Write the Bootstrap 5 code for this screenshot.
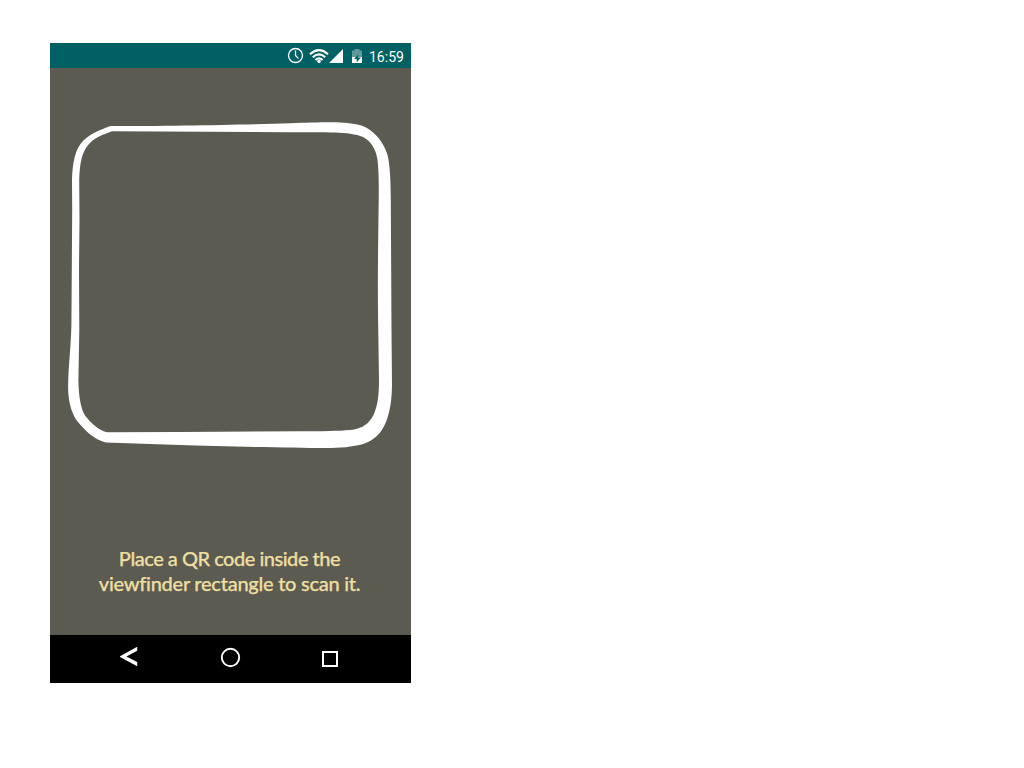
<!DOCTYPE html>
<html lang="en">
<head>
<meta charset="utf-8">
<meta name="viewport" content="width=device-width, initial-scale=1">
<title>Scan QR code</title>
<link href="https://cdn.jsdelivr.net/npm/bootstrap@5.3.0/dist/css/bootstrap.min.css" rel="stylesheet">
<style>
.phone { width: 361px; height: 640px; margin: 43px 0 0 50px; background: #5b5b52; }
.status-bar { height: 25px; background: #006064; padding-right: 6px; }
.clock-time { font: 400 14px/28px Roboto, sans-serif; width: 36px; height: 25px; white-space: nowrap; }
.viewfinder { height: 400px; }
.hint { font: 500 20px/25px Lato, sans-serif; color: #eedfa0; margin-top: 78px; padding-right: 2px; -webkit-text-stroke: .25px #eedfa0; }
.hint span { white-space: nowrap; }
.hint-top { letter-spacing: -.48px; }
.hint-bottom { letter-spacing: -.26px; }
.nav-keys { height: 48px; }
</style>
</head>
<body class="bg-white overflow-hidden">
<main class="phone d-flex flex-column">
  <header class="status-bar d-flex justify-content-end flex-shrink-0">
    <svg width="83" height="25" viewBox="286 43 83 25" aria-hidden="true">
      <circle cx="295.5" cy="55.5" r="7" fill="none" stroke="#fff" stroke-width="1.3"/>
      <path d="M295.5 50.5V55.5L298.5 58.5" fill="none" stroke="#fff" stroke-width="1.3"/>
      <g fill="none" stroke="#fff" stroke-width="2.1">
        <path d="M310 54.2Q319 46.2 328 54.2"/>
        <path d="M312.8 57.2Q319 51.7 325.2 57.2"/>
        <path d="M315.4 60Q319 56.900 322.6 60"/>
      </g>
      <circle cx="319" cy="61.5" r="1.8" fill="#fff"/>
      <path d="M343 49V63H329Z" fill="#fff"/>
      <path d="M354.5 49H359.5V50.5H362V57H352V50.5H354.5Z" fill="#5f999b"/>
      <path d="M352 57H362V63H352Z" fill="#fff"/>
      <path d="M358.300 54.500L354 59H356.700V62.300L361 57.500H358.300Z" fill="#006064"/>
    </svg>
    <span class="clock-time text-white">16:59</span>
  </header>
  <section class="flex-grow-1">
    <svg class="viewfinder d-block w-100" viewBox="50 68 361 400" role="img" aria-label="Viewfinder">
      <path fill="#fff" fill-rule="evenodd" d="M110.5 126C170 126 250 124.500 290 123.200C310 122.700 328 122 340 122.500C350 123 359 124 366 127.500C376 133 384 143 387.500 155C390 165 390.700 180 390.800 200L391.500 330L392 385C391.800 400 390 412 386 422C381 434 374 440 364 443.700C352 447 340 448 325 448C290 447.700 220 446.500 180 445L106 442.600C95 440 85 431 76 419.500C71 411 68.200 401 68.100 387C68.300 365 70.800 350 71.400 325L72.200 210L72 180C72.500 163 75 149 83 141C90 134 98 131 105 128Z
        M112 131.200L290 132.200C310 132.200 325 132 335 132.500C346 133 356 134 363 137C371 141 376 149 377.500 160C378.500 169 379 180 378.700 200C378.200 240 377.500 280 378.100 320L379 380C378.900 395 378 405 373.500 415C369 424 362 428 354 429.500C343 431 325 431.300 300 431.200L180 432L107 432.200C98 430 91 423 85 415.500C80.500 408 78.600 395 78.400 380L79.300 330L79 270L79.500 220L79.200 180C79.700 163 82 154 86 148C91 140 99 136 105 134Z"/>
    </svg>
    <p class="hint text-center mb-0"><span class="hint-top">Place a QR code inside the</span><br><span class="hint-bottom">viewfinder rectangle to scan it.</span></p>
  </section>
  <footer class="nav-keys bg-black flex-shrink-0">
    <svg class="d-block" width="361" height="48" viewBox="50 635 361 48" aria-hidden="true">
      <path d="M137.200 646.700V650.700L126.500 656.500L137.200 662V666.200L120 657V656.200Z" fill="#fff"/>
      <circle cx="230.500" cy="657.500" r="8.700" fill="none" stroke="#fff" stroke-width="1.900"/>
      <path d="M323 652H337V666H323Z" fill="none" stroke="#fff" stroke-width="2"/>
    </svg>
  </footer>
</main>
<script src="https://cdn.jsdelivr.net/npm/bootstrap@5.3.0/dist/js/bootstrap.bundle.min.js"></script>
</body>
</html>
